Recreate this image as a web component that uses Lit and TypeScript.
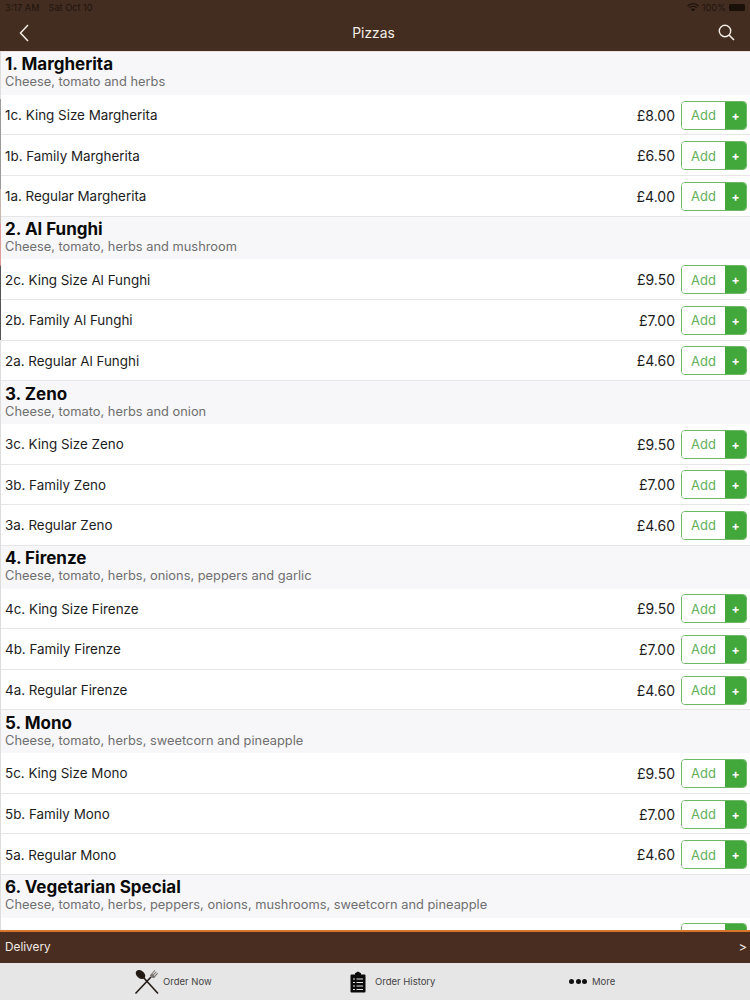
import { LitElement, html, css, svg } from "lit";
import { customElement } from "lit/decorators.js";

const sections = [
  { t: "1. Margherita", d: "Cheese, tomato and herbs", items: [["1c. King Size Margherita", "£8.00"], ["1b. Family Margherita", "£6.50"], ["1a. Regular Margherita", "£4.00"]] },
  { t: "2. Al Funghi", d: "Cheese, tomato, herbs and mushroom", items: [["2c. King Size Al Funghi", "£9.50"], ["2b. Family Al Funghi", "£7.00"], ["2a. Regular Al Funghi", "£4.60"]] },
  { t: "3. Zeno", d: "Cheese, tomato, herbs and onion", items: [["3c. King Size Zeno", "£9.50"], ["3b. Family Zeno", "£7.00"], ["3a. Regular Zeno", "£4.60"]] },
  { t: "4. Firenze", d: "Cheese, tomato, herbs, onions, peppers and garlic", items: [["4c. King Size Firenze", "£9.50"], ["4b. Family Firenze", "£7.00"], ["4a. Regular Firenze", "£4.60"]] },
  { t: "5. Mono", d: "Cheese, tomato, herbs, sweetcorn and pineapple", items: [["5c. King Size Mono", "£9.50"], ["5b. Family Mono", "£7.00"], ["5a. Regular Mono", "£4.60"]] },
  { t: "6. Vegetarian Special", d: "Cheese, tomato, herbs, peppers, onions, mushrooms, sweetcorn and pineapple", items: [["", ""]] },
];

const cutlery = svg`<svg width="26" height="26" viewBox="0 0 26 26">
  <path d="M1.5 24.5 L17 8" stroke="#241a14" stroke-width="1.6" fill="none"/>
  <path d="M24 24.5 L9 8" stroke="#241a14" stroke-width="1.6" fill="none"/>
  <ellipse cx="6.5" cy="5.5" rx="5.4" ry="3.8" transform="rotate(42 6.5 5.5)" fill="#241a14"/>
  <path d="M17.5 8.5 L15.8 6.6 L20.6 1 L21.3 1.6 L18.4 5 L19 5.6 L22 2.4 L22.7 3 L19.7 6.3 L20.3 6.9 L23.3 3.8 L24 4.4 L20 9.2 Z" fill="#77736f"/>
</svg>`;

const clip = svg`<svg width="16" height="22" viewBox="0 0 16 22">
  <path d="M1.5 3.5 H5 V2.2 L8 .6 L11 2.2 V3.5 H14.5 A1 1 0 0 1 15.5 4.5 V20.5 A1 1 0 0 1 14.5 21.5 H1.5 A1 1 0 0 1 .5 20.5 V4.5 A1 1 0 0 1 1.5 3.5 Z" fill="#0c0c0c"/>
  <path d="M3 8 H5 M6.5 8 H13 M3 11.5 H5 M6.5 11.5 H13 M3 15 H5 M6.5 15 H13 M3 18.5 H5 M6.5 18.5 H13" stroke="#e6e5e5" stroke-width="1.1"/>
</svg>`;

@customElement("app-root")
export class AppRoot extends LitElement {
  static styles = css`
    :host { display: block; width: 750px; height: 1000px; font-family: "Inter", "Lato", sans-serif; }
    .page { height: 1000px; display: flex; flex-direction: column; overflow: hidden; background: #fff; }
    .top { flex: 0 0 52px; background: #432d20; display: flex; flex-direction: column; border-bottom: 1px solid #e9e4df; box-sizing: border-box; }
    .status { height: 14px; display: flex; justify-content: space-between; align-items: center; padding: 0 5px 0 5px; font-size: 9.2px; color: #1f140d; }
    .status .l { display: flex; gap: 9px; }
    .status .r { display: flex; align-items: center; gap: 3px; }
    .batt { width: 16px; height: 7px; background: #1a100a; border-radius: 1.5px; }
    .nav { flex: 1; display: flex; align-items: center; justify-content: space-between; padding: 0 15px 0 19px; color: #f3ede8; font-size: 13.8px; }
    .nav svg { display: block; }
    .list { flex: 1; min-height: 0; overflow: hidden; border-left: 1px solid #e8e8e8;
      border-image: linear-gradient(to bottom, #ddd 0 5.5%, #9a9a9a 5.5% 15.7%, #c8b8b0 15.7% 19.7%, #e39a9a 19.7% 24.3%, #555 24.5% 32.8%, #ddd 32.8% 100%) 1; }
    .head { height: 42.8px; box-sizing: border-box; background: #f7f7fa; padding: 2.4px 4px 0 4px; display: flex; flex-direction: column; }
    .head .t { font-size: 17px; font-weight: 700; line-height: 20px; color: #0a0a0a; }
    .head .d { font-size: 12.85px; line-height: 15px; color: #6f6f6f; }
    .row { height: 40.6px; box-sizing: border-box; background: #fff; border-bottom: 1px solid #e6e6e6; display: flex; align-items: center; padding: 1px 3px 0 4px; font-size: 13.4px; color: #1c1c1c; }
    .row .n { flex: 1; }
    .row .p { margin-right: 6px; font-size: 14px; }
    .btn { width: 66px; height: 29px; box-sizing: border-box; display: flex; border: 1px solid #6db765; border-radius: 4px; overflow: hidden; color: #62b05a; font-size: 13px; }
    .btn .a { flex: 1; display: flex; align-items: center; justify-content: center; background: #fff; }
    .btn .plus { width: 21px; display: flex; align-items: center; justify-content: center; background: #43a83c; color: #fff; font-size: 12px; font-weight: 700; }
    .delivery { flex: 0 0 33px; box-sizing: border-box; background: #492d21; border-top: 2px solid #d9752b; display: flex; justify-content: space-between; align-items: center; padding: 0 3px 2px 5px; color: #f1ebe6; font-size: 11.8px; }
    .delivery .gt { font-size: 13px; }
    .tabs { flex: 0 0 37px; background: #e7e6e6; display: grid; grid-template-columns: 303px 213px 1fr; align-items: center; font-size: 9.5px; color: #444; }
    .tab { display: flex; align-items: center; gap: 3px; }
    .tab.a { padding-left: 134px; }
    .tab.b { padding-left: 47px; gap: 9px; }
    .tab.c { padding-left: 53px; gap: 5px; }
    .dots { display: flex; gap: 1.5px; }
    .dots i { width: 5px; height: 5px; border-radius: 50%; background: #111; display: block; }
  `;

  render() {
    return html`<div class="page">
      <div class="top">
        <div class="status">
          <div class="l"><span>3:17 AM</span><span>Sat Oct 10</span></div>
          <div class="r">
            <svg width="12" height="9" viewBox="0 0 12 9"><path d="M.6 3 A7.6 7.6 0 0 1 11.4 3 M2.3 4.8 A5.2 5.2 0 0 1 9.7 4.8" fill="none" stroke="#1a100a" stroke-width="1.2"/><path d="M6 8.6 L3.9 6.5 A3 3 0 0 1 8.1 6.5 Z" fill="#1a100a"/></svg>
            <span>100%</span><span class="batt"></span>
          </div>
        </div>
        <div class="nav">
          <svg width="10" height="18" viewBox="0 0 10 18"><path d="M9 1 L1.5 9 L9 17" fill="none" stroke="#f3ede8" stroke-width="1.5"/></svg>
          <span>Pizzas</span>
          <svg width="17" height="17" viewBox="0 0 17 17"><circle cx="7" cy="7" r="5.7" fill="none" stroke="#f3ede8" stroke-width="1.4"/><path d="M11 11 L16 16" stroke="#f3ede8" stroke-width="1.6"/></svg>
        </div>
      </div>
      <div class="list">
        ${sections.map((s) => html`
          <div class="head"><div class="t">${s.t}</div><div class="d">${s.d}</div></div>
          ${s.items.map((i) => html`<div class="row">
            <span class="n">${i[0]}</span><span class="p">${i[1]}</span>
            <div class="btn"><span class="a">${i[0] ? "Add" : ""}</span><span class="plus">${i[0] ? "+" : ""}</span></div>
          </div>`)}
        `)}
      </div>
      <div class="delivery"><span>Delivery</span><span class="gt">&gt;</span></div>
      <div class="tabs">
        <div class="tab a">${cutlery}<span>Order Now</span></div>
        <div class="tab b">${clip}<span>Order History</span></div>
        <div class="tab c"><span class="dots"><i></i><i></i><i></i></span><span>More</span></div>
      </div>
    </div>`;
  }
}
